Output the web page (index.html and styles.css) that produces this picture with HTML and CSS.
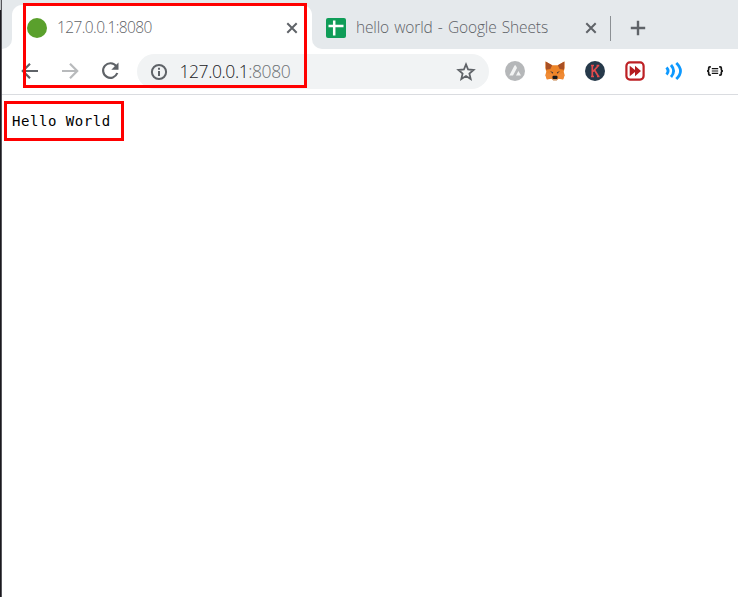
FILE: index.html
```
<!DOCTYPE html>
<html lang="en">
<head>
<meta charset="utf-8">
<title>127.0.0.1:8080</title>
<link rel="stylesheet" href="styles.css">
</head>
<body>
<div class="screen">
  <div class="desktop-edge"></div>
  <div class="browser">
    <div class="tabs">
      <div class="previous-tab"></div>
      <div class="tab active">
        <span class="favicon-dot"></span>
        <span class="tab-title local">127.0.0.1:8080</span>
        <svg class="close" viewBox="0 0 12 12"><path d="M1.3 1.3 10.7 10.7M10.7 1.3 1.3 10.7"/></svg>
      </div>
      <div class="tab inactive">
        <svg class="sheets" viewBox="0 0 20 20"><rect width="20" height="20" rx="2" fill="#0f9d58"/><path d="M2.5 8h15M8.2 2.5v15" stroke="#fff" stroke-width="2.5"/></svg>
        <span class="tab-title sheet-title">hello world - Google Sheets</span>
        <svg class="close" viewBox="0 0 12 12"><path d="M1.3 1.3 10.7 10.7M10.7 1.3 1.3 10.7"/></svg>
      </div>
      <svg class="new-tab" viewBox="0 0 16 16"><path d="M8 .8v14.4M.8 8h14.4"/></svg>
    </div>
    <div class="toolbar">
      <div class="nav">
        <svg viewBox="0 0 20 20"><path d="M18 10H3M10 2.8 2.8 10l7.2 7.2"/></svg>
        <svg class="disabled" viewBox="0 0 20 20"><path d="M2 10h15M10 2.8l7.2 7.2-7.2 7.2"/></svg>
        <svg viewBox="0 0 20 20"><path d="M16.3 5.2A7.3 7.3 0 1 0 17.3 12"/><path d="M18.5 1.5v7.2h-7.2z" fill="#5f6368" stroke="none"/></svg>
      </div>
      <div class="address">
        <svg class="info" viewBox="0 0 18 18"><circle cx="9" cy="9" r="7.1"/><path d="M9 8v5M9 4.7v2"/></svg>
        <span class="url">127.0.0.1<span>:8080</span></span>
        <svg class="star" viewBox="0 0 20 20"><path d="m10 2.4 2.1 5.1 5.5.5-4.2 3.6 1.3 5.4-4.7-2.9L5.3 17l1.3-5.4L2.4 8l5.5-.5z"/></svg>
      </div>
      <div class="extensions">
        <svg viewBox="0 0 20 20"><circle cx="10" cy="10" r="10" fill="#b5b7b9"/><path d="M4.3 14.4 9.5 4.6q.7-.9 1.3 0l1.2 2.3-4 7.5zM11 14.4l2.4-4.4 2.6 4.4z" fill="#f2f3f3"/></svg>
        <svg viewBox="0 0 20 20"><path d="m.6.6 6.6 3.6h5.6L19.4.6l.3 6.4-1 3.8 1 3.5-1.6 4.2-4.5-.8-2 1.7H8.4l-2-1.7-4.5.8-1.6-4.2 1-3.5L.3 7z" fill="#ed8427"/><path d="m.6.6 6.6 3.6L5.4 8 1 8.8zM19.4.6l-6.6 3.6L14.6 8l4.4.8z" fill="#a95025"/><path d="m2 12 5.7 1.3.7 4-2-.2-4.5 1.2-1.2-4zm16 0-5.7 1.3-.7 4 2-.2 4.5 1.2 1.2-4z" fill="#f08b35"/><path d="m5 10 3.2 1.2-.5 1.5zm10 0-3.2 1.2.5 1.5z" fill="#4b3b35"/><path d="m7.3 15.7 1-.9h3.4l1 .9-.5 2.4H7.8z" fill="#17191b"/><path d="m6.5 17.3 1.7 1.2h3.6l1.7-1.2-1.8 2.1H8.3z" fill="#cbbdb2"/></svg>
        <svg viewBox="0 0 20 20"><circle cx="10" cy="10" r="10" fill="#26394a"/><path d="M7.3 4v12M6 4.5h3M6 15.5h3M13.5 4.5 8 10.5M9.5 9l4 6.5M11.6 4.5h2.7M12 15.5h2.5" fill="none" stroke="#e34a4c" stroke-width="1.7"/></svg>
        <svg viewBox="0 0 20 20"><rect x="1.4" y="1.4" width="17.2" height="17.2" rx="3.5" fill="#fff" stroke="#bd2024" stroke-width="2.2"/><path d="M4.7 4.7 10 9V4.7l6 5.3-6 5.3V11l-5.3 4.3z" fill="#b51d20"/></svg>
        <svg viewBox="0 0 20 20"><g fill="none" stroke="#0d99ff" stroke-width="2.8"><path d="M1.5 6.5q3.2 3.5 0 7M6 4q5.2 6 0 12M11.3 2q8.4 8 0 16"/></g></svg>
        <svg viewBox="0 0 20 20"><g fill="none" stroke="#151515" stroke-width="1.7"><path d="M5.8 5.8H4.9q-1.2 0-1.2 1.3v1.5q0 1.4-1.7 1.4 1.7 0 1.7 1.4v1.5q0 1.3 1.2 1.3h.9M14.2 5.8h.9q1.2 0 1.2 1.3v1.5q0 1.4 1.7 1.4-1.7 0-1.7 1.4v1.5q0 1.3-1.2 1.3h-.9"/><path d="M6.8 7.7h6.4M6.8 10h6.4M6.8 12.3h6.4" stroke-width="1.2"/></g></svg>
      </div>
    </div>
    <main>Hello World</main>
  </div>
  <div class="highlight address-highlight"></div>
  <div class="highlight content-highlight"></div>
</div>
</body>
</html>
```
FILE: styles.css
```
* { box-sizing: border-box; }
body { margin: 0; background: #fff; overflow: hidden; font-family: "Open Sans", "Noto Sans", sans-serif; }
svg { display: block; flex: none; }
.screen { position: relative; display: flex; width: 738px; height: 597px; }
.desktop-edge { width: 2px; background: linear-gradient(#bfc3c6 10px, #1b191e 10px); border-right: 1px solid #55555a; }
.browser { flex: 1; min-width: 0; }
.tabs { display: flex; height: 49px; background: linear-gradient(90deg, #fff 400px, #e5e9ec 400px); }
.previous-tab { flex: none; width: 10px; height: 49px; background: #e5e9ec; border-radius: 0 0 10px 0; }
.tab { display: flex; align-items: center; flex: none; height: 49px; }
.active {
  width: 300px;
  padding: 6px 14px 0 15px;
  background:
    linear-gradient(#fff, #fff) 0 15px / 300px 34px no-repeat,
    linear-gradient(#fff, #fff) 10px 5px / 280px 10px no-repeat,
    radial-gradient(circle at 100% 100%, #fff 9.5px, transparent 10.5px) 0 5px / 10px 10px no-repeat,
    radial-gradient(circle at 0 100%, #fff 9.5px, transparent 10.5px) 290px 5px / 10px 10px no-repeat,
    #e5e9ec;
}
.inactive {
  width: 299px;
  padding: 6px 14px 0;
  background: linear-gradient(#8c9094, #8c9094) right 16px / 1px 25px no-repeat, #e5e9ec;
  border-radius: 0 0 0 10px;
}
.favicon-dot { width: 20px; height: 20px; background: #5aa02c; border-radius: 50%; }
.sheets { width: 20px; height: 20px; }
.tab-title { margin: -1px 0 0 10px; font-size: 15.5px; font-weight: 350; line-height: 24px; color: #5f6368; white-space: nowrap; }
.local { letter-spacing: -.6px; }
.sheet-title { letter-spacing: -.15px; word-spacing: 1.4px; }
.close { width: 12px; height: 12px; margin-left: auto; }
.close path { stroke: #5f6368; stroke-width: 2; }
.new-tab { width: 16px; height: 16px; margin: 20px 0 0 19px; }
.new-tab path { stroke: #5f6368; stroke-width: 2.4; }
.toolbar { display: flex; height: 46px; padding-top: 5px; border-bottom: 1px solid #dadce0; }
.nav { display: flex; gap: 20px; padding: 7px 17.5px 0 17.5px; }
.nav svg { width: 20px; height: 20px; fill: none; stroke: #5f6368; stroke-width: 2.2; }
.nav .disabled { stroke: #b8babc; }
.address { display: flex; align-items: center; width: 352px; height: 35px; padding: 0 13.5px 0 13.4px; background: #f1f3f4; border-radius: 18px; }
.info { width: 18px; height: 18px; fill: none; stroke: #5f6368; stroke-width: 2; }
.url { margin: -1px 0 0 11px; font-size: 17.5px; font-weight: 350; letter-spacing: -.4px; line-height: 28px; color: #202124; }
.url span { color: #6d7175; }
.star { width: 20px; height: 20px; margin-left: auto; fill: none; stroke: #5f6368; stroke-width: 1.8; }
.extensions { display: flex; gap: 20px; padding: 7px 0 0 16.4px; }
.extensions svg { width: 20px; height: 20px; }
main { padding: 16px 0 0 10px; font: 14px/20px "DejaVu Sans Mono", monospace; letter-spacing: .55px; color: #000; }
.highlight { position: absolute; border: 3px solid #f00; }
.address-highlight { left: 23px; top: 3px; width: 284px; height: 85px; }
.content-highlight { left: 4px; top: 101px; width: 120px; height: 40px; }
```
